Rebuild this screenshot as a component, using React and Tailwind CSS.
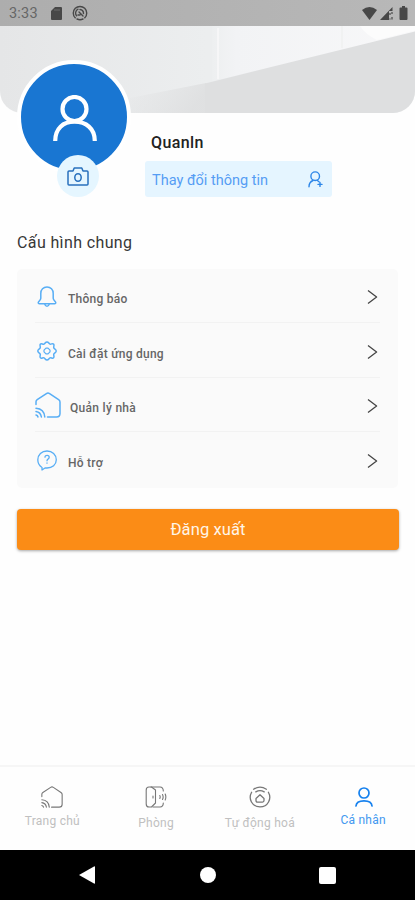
import React from 'react';

const stroke = { fill: 'none', stroke: 'currentColor', strokeLinecap: 'round', strokeLinejoin: 'round' };

function HomeIcon({ size, width = 1.5 }) {
  return (
    <svg width={size} height={size} viewBox="0 0 26 26" {...stroke} strokeWidth={width}>
      <path d="M1 12.5V9.8Q1 8.4 2.2 7.6L11.4 1.6Q13 .6 14.6 1.6L23.6 7.6Q25 8.5 25 10V21.5Q25 25 21.5 25H12.5" />
      <path d="M1 16.2Q9.2 16.8 9.8 25M1 19.6Q5.6 20.2 6.4 25M1 23Q2.6 23.2 3 25" />
    </svg>
  );
}

function BellIcon() {
  return (
    <svg width="20" height="22" viewBox="0 0 20 22" {...stroke} strokeWidth="1.5">
      <path d="M10 1C6.3 1 3.8 3.7 3.8 7.4V12.2C3.8 14.2 1.2 15.5 1.2 16.8Q1.2 17.8 2.4 17.8H17.6Q18.8 17.8 18.8 16.8C18.8 15.5 16.2 14.2 16.2 12.2V7.4C16.2 3.7 13.7 1 10 1Z" />
      <path d="M7.8 18.2Q8.3 20.3 10 20.3T12.2 18.2" />
    </svg>
  );
}

function GearIcon() {
  return (
    <svg width="20" height="20" viewBox="0 0 20 20" {...stroke} strokeWidth="1.5">
      <path d="M10 .9C11.7 .9 11.7 2.6 13 3.1S15.4 1.9 16.6 3.1S16.2 5.5 16.8 6.9S19.2 8.3 19.2 10S17.4 11.8 16.8 13.1S17.8 15.6 16.6 16.8S14.3 16.3 13 16.9S11.7 19.1 10 19.1S8.3 17.5 7 16.9S4.6 18 3.4 16.8S3.8 14.5 3.2 13.1S.8 11.7 .8 10S2.6 8.3 3.2 6.9S2.2 4.3 3.4 3.1S5.7 3.7 7 3.1S8.3 .9 10 .9Z" />
      <path strokeWidth="1.2" d="M9 7.1H11L13 9.2V10.8L11 12.9H9L7 10.8V9.2Z" />
    </svg>
  );
}

function HelpIcon() {
  return (
    <svg width="20" height="21" viewBox="0 0 20 21" {...stroke} strokeWidth="1.3">
      <path d="M4.7 17.2C2.3 15.6 .8 12.8 .8 9.8C.8 4.8 4.7 1 10 1S19.3 4.8 19.3 9.8S15.3 18 10 18H8L5 20V17.3" />
      <path d="M8 7.2C8 4.8 12.2 4.8 12.2 7.3C12.2 9 10 9 10 10.8M10 13V13.2" />
    </svg>
  );
}

function Chevron() {
  return (
    <svg width="11" height="14" viewBox="0 0 11 14" {...stroke} strokeWidth="1.3" strokeLinecap="butt">
      <path d="M1 .6L9.6 7L1 13.4" />
    </svg>
  );
}

function PersonIcon() {
  return (
    <svg width="18" height="20" viewBox="0 0 18 20" {...stroke} strokeWidth="1.7">
      <circle cx="9" cy="6" r="5" />
      <path d="M1 19C1.2 15 4.2 13.8 9 13.8S16.8 15 17 19" />
    </svg>
  );
}

function DoorIcon() {
  return (
    <svg width="22" height="22" viewBox="0 0 22 22" {...stroke} strokeWidth="1.1">
      <path d="M4 1H6.5L10.5 4V17L6.5 21H4Q1.2 21 1.2 18V4Q1.2 1 4 1Z" />
      <path d="M6 1H15Q18.3 1.2 18.3 5M8 21H15Q18.3 20.8 18.3 17M8 10V12M14.8 9.5Q15.6 11 14.8 12.5M17.5 8.5Q18.8 11 17.5 13.5M20.2 8Q21.5 11 20.2 14" />
    </svg>
  );
}

function AutomationIcon() {
  return (
    <svg width="22" height="22" viewBox="0 0 22 22" {...stroke} strokeWidth="1.3">
      <path d="M2.6 6.2C-1 12.6 3 20.9 11 20.9S23 12.6 19.4 6.2M4.6 3.2Q11-.8 17.4 3.2M6.8 5.9Q11 3.4 15.2 5.9" />
      <path d="M7 12.4L11 8.8L15 12.4V14.6Q15 16.1 13.5 16.1H8.5Q7 16.1 7 14.6Z" />
    </svg>
  );
}

const rows = [
  { label: 'Thông báo', icon: <BellIcon />, text: 'ml-[10px] tracking-[0.25px]' },
  { label: 'Cài đặt ứng dụng', icon: <GearIcon />, text: 'ml-[10px] tracking-[0.25px]' },
  { label: 'Quản lý nhà', icon: <HomeIcon size={26} width={1.5} />, text: 'ml-[9px] tracking-[0.3px]' },
  { label: 'Hỗ trợ', icon: <HelpIcon />, text: 'ml-[10px] tracking-[0.25px]' },
];

const tabs = [
  { label: 'Trang chủ', icon: <HomeIcon size={22} width={1.3} />, color: 'text-[#777]', text: 'text-[#c0c0c0] mt-[3px]' },
  { label: 'Phòng', icon: <DoorIcon />, color: 'text-[#777]', text: 'text-[#c0c0c0] mt-[5px]' },
  { label: 'Tự động hoá', icon: <AutomationIcon />, color: 'text-[#777]', text: 'text-[#c0c0c0] mt-[5px]' },
  { label: 'Cá nhân', icon: <PersonIcon />, color: 'text-[#1681ee]', text: 'text-[#4298f0] mt-[2px] pr-px' },
];

function StatusBar() {
  return (
    <div className="flex h-[26px] items-center bg-gradient-to-r from-[#adadad] to-[#b8b8b8] pl-[9px] pr-[7px] text-[#484848]">
      <span className="w-[42px] pt-[2px] text-[14.5px] leading-4 tracking-[0.2px] text-[#666]">3:33</span>
      <svg className="mt-px" width="11" height="13" viewBox="0 0 11 13" fill="currentColor"><path d="M4 0H10Q11 0 11 1V12Q11 13 10 13H1Q0 13 0 12V4Z" /><path d="M4 2V4M6 2V4M8 2V4" stroke="#888" strokeWidth=".6" /></svg>
      <svg className="ml-[10px]" width="16" height="16" viewBox="0 0 16 16" {...stroke} strokeWidth="1.4">
        <path d="M3.2 12.8A6.7 6.7 0 1 1 12.8 12.8M5 14Q8 15.5 11 14M4.6 10.8A4.3 4.3 0 0 1 6 4.2" />
        <path d="M8 4.5Q11.5 5 11.5 8.5M7 7L11 11M6 10H8" />
      </svg>
      <div className="ml-auto flex items-center gap-[3px]">
        <svg width="15" height="13" viewBox="0 0 15 13" fill="currentColor"><path d="M0 3Q7.5-3 15 3L7.5 13Z" /></svg>
        <svg width="13" height="13" viewBox="0 0 13 13" fill="currentColor"><path d="M0 13L12.5 0V4H9V13Z" /><path d="M10 6V8M12 5V7M12 10V12.5M10 11.5V12.5" stroke="currentColor" strokeWidth="1.2" /></svg>
        <svg className="ml-[3px]" width="9" height="14" viewBox="0 0 9 14" fill="currentColor"><path d="M3 0H6V1.5H7.5Q8.5 1.5 8.5 2.5V13Q8.5 14 7.5 14H1.5Q.5 14 .5 13V2.5Q.5 1.5 1.5 1.5H3Z" /></svg>
      </div>
    </div>
  );
}

export default function App() {
  return (
    <div className="flex h-[900px] w-[415px] flex-col overflow-hidden bg-[#fefefe] font-['Roboto',sans-serif]">
      <header className="h-[113px] shrink-0 overflow-hidden rounded-b-[22px]">
        <StatusBar />
        <svg className="block" width="415" height="87" viewBox="0 0 415 87">
          <defs>
            <linearGradient id="wall" x1="0" y1="0" x2="1" y2="0">
              <stop offset="0" stopColor="#e5e6e7" /><stop offset=".5" stopColor="#eceeef" /><stop offset="1" stopColor="#eceeef" />
            </linearGradient>
            <linearGradient id="panel" x1="0" y1="0" x2="1" y2="0">
              <stop offset="0" stopColor="#edeff0" /><stop offset=".12" stopColor="#f2f3f5" /><stop offset="1" stopColor="#f8f8f9" />
            </linearGradient>
            <linearGradient id="shade" x1="0" y1="0" x2="1" y2=".3">
              <stop offset="0" stopColor="#dedfe0" stopOpacity="0" /><stop offset="1" stopColor="#dedfe0" stopOpacity=".9" />
            </linearGradient>
          </defs>
          <path fill="url(#wall)" d="M0 0H415V87H0Z" />
          <path fill="url(#shade)" d="M130 72L206 57V87H130Z" />
          <path fill="url(#panel)" d="M212 0H415V6L212 58Z" />
          <path fill="#dedfe0" d="M415 5.5V87H205V57.5Z" />
          <path d="M218 2V53" stroke="#f8f9f9" strokeWidth="1.5" />
          <path d="M342 0V22" stroke="#f1f2f2" strokeWidth="2" />
          <path d="M360 0Q366 9 377 14L415 4.5V0Z" fill="#fcfcfc" />
        </svg>
      </header>

      <section className="-mt-[53px] flex h-[151px] shrink-0 pl-[17px]">
        <div className="relative h-[114px] w-[114px] rounded-full border-[4px] border-white bg-[#1976d2] text-white">
          <svg className="ml-[32px] mt-[31px]" width="44" height="47" viewBox="0 0 44 47" fill="none" stroke="currentColor" strokeWidth="4.2">
            <circle cx="21.5" cy="14" r="12" />
            <path d="M2.2 46C2.2 33.5 10 26.7 21.5 26.7S41.8 33.5 41.8 46" />
          </svg>
          <div className="absolute left-[36px] top-[91px] flex h-[42px] w-[42px] items-center justify-center rounded-full bg-[#e5f6ff] text-[#2870bd]">
            <svg width="22" height="19" viewBox="0 0 22 19" {...stroke} strokeWidth="1.5">
              <path d="M2 4H6L7.2 1H14.8L16 4H20Q21 4 21 5V17Q21 18 20 18H2Q1 18 1 17V5Q1 4 2 4Z" />
              <ellipse cx="11" cy="10.5" rx="3.2" ry="3.8" />
            </svg>
          </div>
        </div>
        <div className="ml-[14px] flex w-[187px] flex-col pt-[73px]">
          <h1 className="h-[28px] pl-[6px] text-[16px] font-medium leading-5 tracking-[0.4px] text-[#222]">Quanln</h1>
          <button className="flex h-[36px] shrink-0 items-center justify-between rounded-[3px] bg-[#e5f5ff] pl-[7px] pr-[9px] text-[#559df4]">
            <span className="whitespace-nowrap pt-[3px] text-[14.5px]">Thay đổi thông tin</span>
            <svg className="text-[#2d86e8]" width="15" height="17" viewBox="0 0 15 17" {...stroke} strokeWidth="1.4">
              <circle cx="7.2" cy="5.2" r="4.3" />
              <path d="M1 15.8C1 11.5 3 10.3 5 9.5M9.4 9.5L11 10.7M12 11.4V15.4M10 13.4H14" />
            </svg>
          </button>
        </div>
      </section>

      <main className="flex flex-1 flex-col px-[17px] pt-[19px]">
        <h2 className="h-[39px] pt-px text-[16px] leading-6 tracking-[0.38px] text-[#373737]">Cấu hình chung</h2>
        <div className="flex h-[219px] flex-col rounded-[5px] bg-[#fafafa] px-[18px]">
          {rows.map(({ label, icon, text }, i) => (
            <div key={label} className={`flex h-[54.4px] items-center pt-[2px] ${i < 3 ? 'border-b border-[#f2f2f2]' : ''}`}>
              <span className={`flex shrink-0 justify-center text-[#58aef5] ${i === 2 ? 'w-[26px]' : 'w-[23px]'}`}>{icon}</span>
              <span className={`whitespace-nowrap pt-[5px] text-[12px] font-medium leading-4 text-[#666] ${text}`}>{label}</span>
              <span className="ml-auto mr-[2px] pt-px text-[#444]"><Chevron /></span>
            </div>
          ))}
        </div>
        <button className="mt-[21px] h-[41px] w-[382px] rounded-[4px] bg-[#fb8c16] pt-px text-[16.5px] tracking-[0.1px] text-[#fff5e8] shadow-[0_1px_3px_rgba(0,0,0,0.35)]">Đăng xuất</button>
      </main>

      <nav className="grid h-[85px] shrink-0 grid-cols-4 border-t-2 border-[#f6f6f6]">
        {tabs.map(({ label, icon, color, text }) => (
          <div key={label} className="flex flex-col items-center pl-px pt-[19px]">
            <span className={`flex h-[22px] items-center ${color}`}>{icon}</span>
            <span className={`whitespace-nowrap text-[12px] leading-5 tracking-[0.25px] ${text}`}>{label}</span>
          </div>
        ))}
      </nav>

      <footer className="flex h-[50px] shrink-0 items-center justify-between bg-black pl-[79px] pr-[79px]">
        <svg width="17" height="18" viewBox="0 0 17 18" fill="#fff"><path d="M0 9L15 .5Q16 0 16 1V17Q16 18 15 17.5Z" /></svg>
        <span className="h-[16px] w-[16px] rounded-full bg-white" />
        <span className="h-[17px] w-[17px] rounded-[2px] bg-white" />
      </footer>
    </div>
  );
}
